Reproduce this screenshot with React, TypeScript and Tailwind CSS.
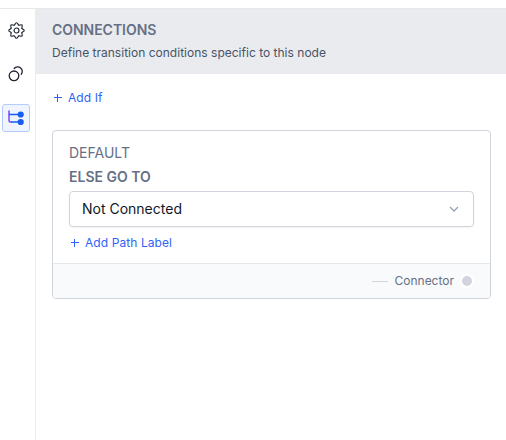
import React from "react";

const GEAR_ANGLES = [0, 45, 90, 135, 180, 225, 270, 315];

function GearIcon() {
  return (
    <svg width="17" height="17" viewBox="0 0 16 16" fill="none" stroke="#1f2430" strokeWidth="1.05" strokeLinecap="round">
      {GEAR_ANGLES.map((angle) => (
        <path key={angle} d="M5.900 2.900C6.900 2.600 6.600 .7 8 .7S9.100 2.600 10.100 2.900" transform={`rotate(${angle} 8 8)`} />
      ))}
      <circle cx="8" cy="8" r="2.3" />
    </svg>
  );
}

function CirclesIcon() {
  return (
    <svg width="16" height="16" viewBox="0 0 16 16" fill="none" stroke="#1f2430" strokeWidth="1.3">
      <circle cx="6" cy="9.8" r="4.800" />
      <path d="M6.200 2.500a4.500 4.500 0 1 1 7 5.800" strokeLinecap="round" />
    </svg>
  );
}

function BranchIcon() {
  return (
    <svg width="16" height="16" viewBox="0 0 16 16" fill="none">
      <path d="M1 .5V10.500a1.500 1.500 0 0 0 1.500 1.500H4" stroke="#6941f5" strokeWidth="1.400" />
      <path d="M1.200 4.500H11M3.500 12H11" stroke="#155eef" strokeWidth="1.500" />
      <circle cx="12.700" cy="4.500" r="3.100" fill="#155eef" />
      <circle cx="12.700" cy="12" r="3.100" fill="#155eef" />
    </svg>
  );
}

function AddLink({ label }: { label: string }) {
  return (
    <button className="flex items-center gap-[6px] text-[12px] leading-4 tracking-[0.007em] text-[#2f63f5]">
      <svg width="8" height="8" viewBox="0 0 8 8" stroke="currentColor" strokeWidth="1">
        <path d="M0 3.500H8M3.500 0V8" />
      </svg>
      <span>{label}</span>
    </button>
  );
}

export default function App() {
  return (
    <div className="flex h-[440px] w-[506px] flex-col overflow-hidden bg-white font-['Inter',sans-serif]">
      <div className="h-[9px] shrink-0 border-b border-[#e8e8eb]" />
      <div className="flex min-h-0 flex-1">
        <nav className="flex w-9 shrink-0 flex-col items-start border-r border-[#eaebef] pt-[7px] pl-[2px]">
          <div className="flex h-7 w-7 items-center justify-center"><GearIcon /></div>
          <div className="mt-4 flex h-7 w-7 items-center justify-center"><CirclesIcon /></div>
          <div className="mt-4 flex h-7 w-7 items-center justify-center rounded-[3px] border border-[#b2ccff] bg-[#eff4ff]"><BranchIcon /></div>
        </nav>
        <main className="flex-1">
          <header className="h-[65px] bg-[#eaebef] px-4 pt-[11px]">
            <h1 className="text-[14px] leading-5 font-semibold tracking-[-0.003em] text-[#667085]">CONNECTIONS</h1>
            <p className="mt-[5px] text-[12px] leading-4 tracking-[0.001em] text-[#475467]">Define transition conditions specific to this node</p>
          </header>
          <div className="pt-4 pr-[15px] pl-4">
            <div className="pl-[2px]"><AddLink label="Add If" /></div>
            <section className="mt-6 h-[169px] overflow-hidden rounded-[4px] border border-[#d0d5dd]">
              <div className="h-[132px] px-4 pt-3">
                <div className="text-[14px] leading-5 text-[#667085]">DEFAULT</div>
                <div className="mt-1 text-[14px] leading-5 font-semibold text-[#667085]">ELSE GO TO</div>
                <div className="mt-1 flex h-9 items-center justify-between rounded-[4px] border border-[#d0d5dd] pr-[14px] pl-3 shadow-[0_1px_2px_rgba(16,24,40,0.05)]">
                  <span className="text-[14px] leading-5 text-[#101828]">Not Connected</span>
                  <svg width="10" height="6" viewBox="0 0 10 6" fill="none" stroke="#98a2b3" strokeWidth="1.3"><path d="M1 1l4 4 4-4" /></svg>
                </div>
                <div className="mt-2 pl-[2px]"><AddLink label="Add Path Label" /></div>
              </div>
              <footer className="flex h-[35px] items-center justify-end border-t border-[#e4e7ec] bg-[#f9fafb] pr-4">
                <span className="h-px w-4 bg-[#d0d5dd]" />
                <span className="ml-[6px] text-[12px] leading-4 text-[#667085]">Connector</span>
                <span className="ml-[6px] h-[14px] w-[14px] rounded-full border-2 border-white bg-[#d0d5dd]" />
              </footer>
            </section>
          </div>
        </main>
      </div>
    </div>
  );
}
